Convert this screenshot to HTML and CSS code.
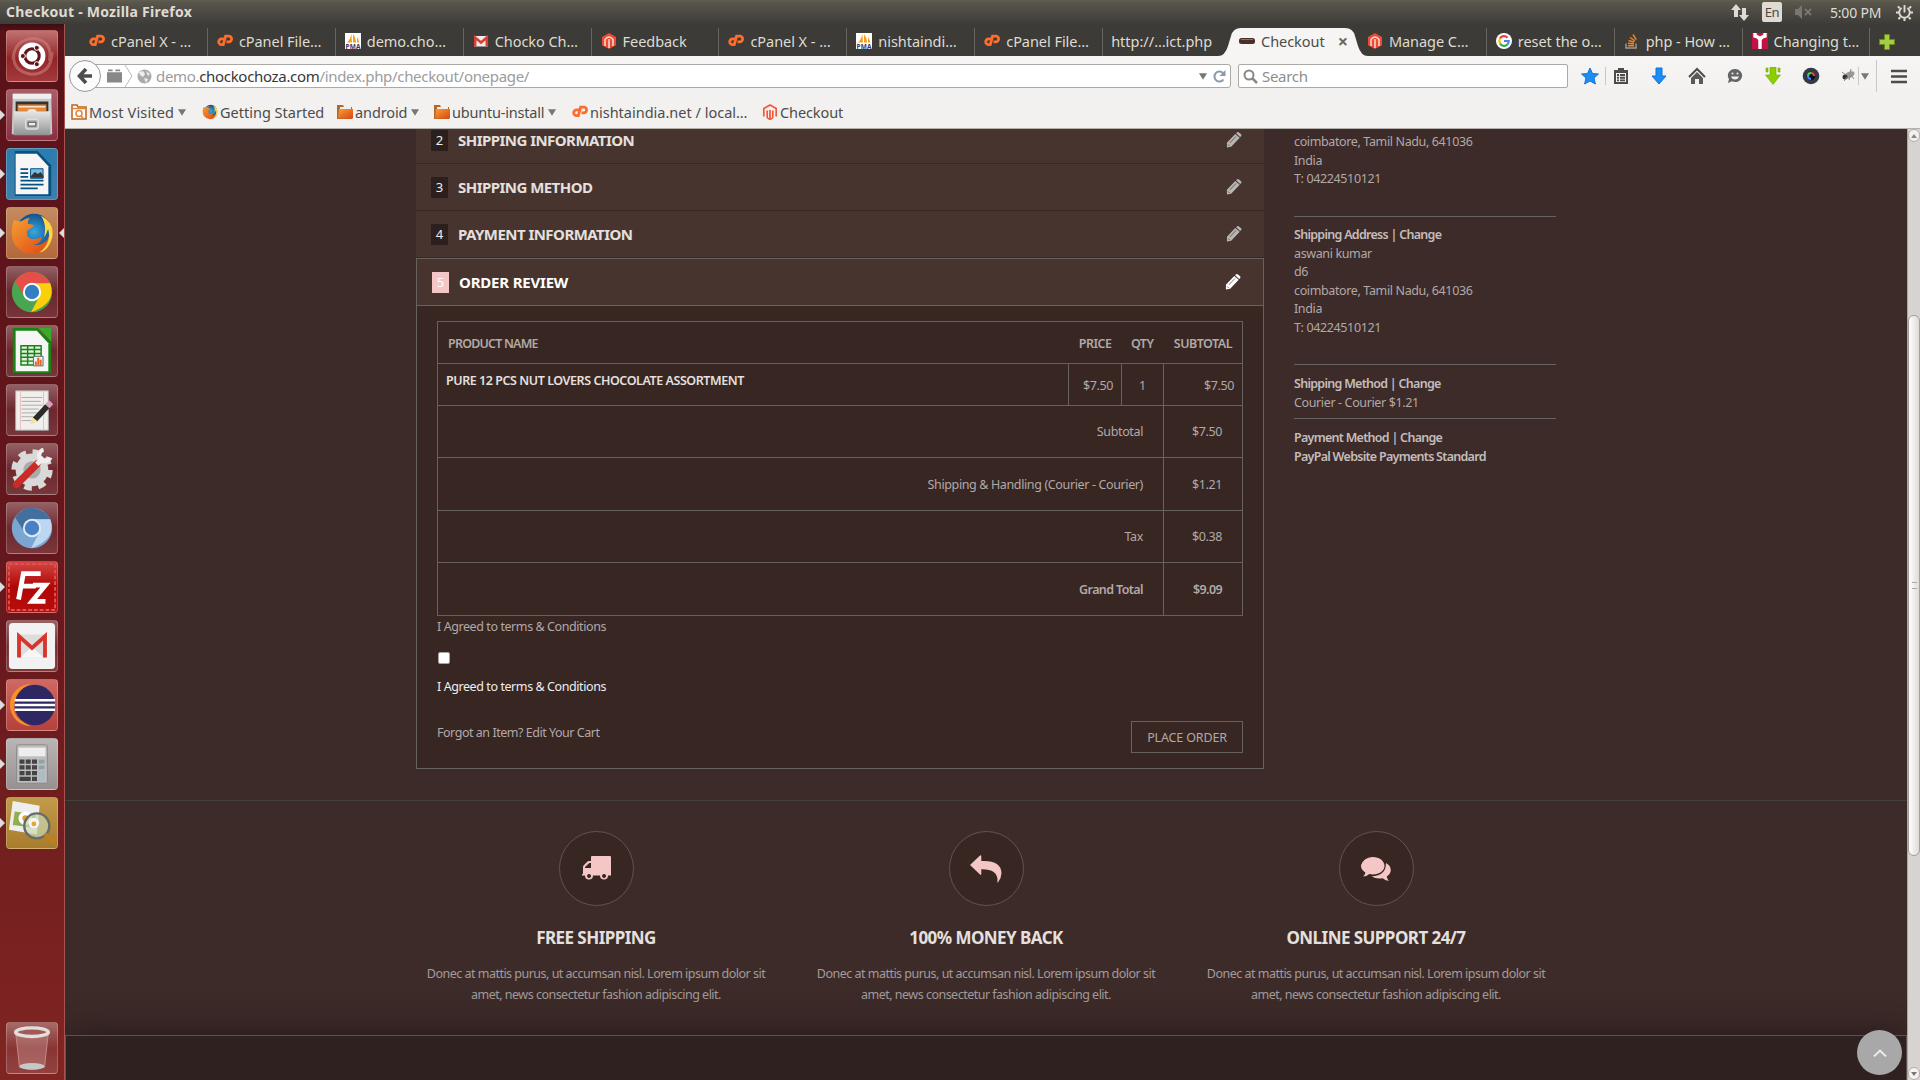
FILE: index.html
```html
<!DOCTYPE html>
<html lang="en">
<head>
<meta charset="utf-8">
<title>Checkout - Mozilla Firefox</title>
<link rel="stylesheet" href="styles.css">
</head>
<body>
<svg class="defs" aria-hidden="true">
<defs>
<linearGradient id="steel" x1="0" y1="0" x2="0" y2="1"><stop offset="0" stop-color="#eee"/><stop offset="1" stop-color="#929292"/></linearGradient>
<linearGradient id="fire" x1="0" y1="0" x2="1" y2="1"><stop offset="0" stop-color="#f7a030"/><stop offset="1" stop-color="#dd4414"/></linearGradient>
<radialGradient id="globe"><stop offset="0" stop-color="#35a8e0"/><stop offset="1" stop-color="#14508f"/></radialGradient>
<symbol id="cp" viewBox="0 0 16 16"><g fill="none" stroke="#ff6c2c" stroke-width="2.8"><path d="M7.500 5.800H4.600a2.800 2.800 0 0 0 0 5.800H6.300L8.600 3.200h3.200a2.800 2.800 0 0 1 0 5.600H9.500"/></g></symbol>
<symbol id="pma" viewBox="0 0 16 16"><path fill="#fff" d="M0 0h16v16H0z"/><path fill="#f8a01c" d="M2 9.5Q5 7 6.4 1L7 9.5zM8 9.5V1q3 4 3.3 8.500zM12 9.500V4q2 3 2.200 5.500z"/><text x="0.5" y="15.500" font-size="6.500" font-weight="bold" fill="#36366c" textLength="15">PMA</text></symbol>
<symbol id="mag" viewBox="0 0 16 16"><path fill="#ee4b35" d="M8 0l7 4v8.200L8 16l-7-3.800V4z"/><path d="M4 13V6.500Q8 1.500 12 6.500V13M8 6v9" fill="none" stroke="#f8ddd6" stroke-width="1.500"/></symbol>
<symbol id="maglight" viewBox="0 0 16 16"><path d="M1.800 12.500V4.600L8 1l6.200 3.600v7.900M5.200 13.800V6.500M10.800 13.800V6.500M8 6v9.500M5.200 13.800L8 15.400l2.800-1.600" fill="none" stroke="#ee5a3c" stroke-width="1.700"/></symbol>
<symbol id="gm" viewBox="0 0 16 16"><path fill="#eee" d="M1 3h14v10.500H1z"/><path d="M2.200 13.500V4.500L8 9.500l5.800-5v9" fill="none" stroke="#d9402f" stroke-width="2.500"/></symbol>
<symbol id="folder" viewBox="0 0 16 16"><path fill="#b3672c" d="M0 1h6l1 2h8v12H0z"/><path fill="#f3ede6" d="M3 3h11v3H3z"/><path fill="url(#fire)" d="M2 5h14v9.500H1z"/></symbol>
<symbol id="pencil" viewBox="0 0 17 17"><path fill="currentColor" d="M1 11.500L9.800 2l4.800 4.200L5.500 15.800 1 16.500zM10.800 1.300l1-1q1-.6 2 .3l2.200 1.900q.8 1 0 1.900l-1 1z"/><path d="M4 11.700l6.600-7M2.200 13.200l1.800 1.800" stroke="#47342e" stroke-width=".7"/></symbol>
<symbol id="firefox" viewBox="0 0 44 44"><circle cx="24" cy="20" r="18" fill="url(#globe)"/><path fill="url(#fire)" d="M4 8q4 2 8 1 4-3 8-3-3 3-2 6 5 0 6 2l-7 5q-1 8 7 8 5 0 8-3-1 8-9 9 16 1 18-16 3 16-8 22-16 8-28-6Q-1 22 4 8z"/><path fill="#ffd640" d="M31 4q14 7 11 22-3 12-13 15 13-10 9-24-2 6-4 8 3-12-3-21z"/></symbol>
<symbol id="down" viewBox="0 0 10 8"><path fill="#777" d="M0 0h10L5 8z"/></symbol>
</defs>
</svg>

<header class="panel">
  <span class="panel-title">Checkout - Mozilla Firefox</span>
  <div class="indicators">
    <svg width="18" height="18" viewBox="0 0 18 18" fill="#dfdbd2"><path d="M5 1l5 6H7v7H3V7H0zM13 18l-5-6h3V5h4v7h3z"/></svg>
    <span class="lang">En</span>
    <svg width="19" height="14" viewBox="0 0 19 14"><path fill="#7b776e" d="M1 4h3l4-4v14L4 10H1z"/><path d="M11 4l6 6M17 4l-6 6" stroke="#7b776e" stroke-width="1.800"/></svg>
    <span class="clock">5:00 PM</span>
    <svg width="17" height="17" viewBox="0 0 18 18" fill="none" stroke="#dfdbd2"><path d="M6 4.200A5.600 5.600 0 1 0 12 4.200M9 1v8" stroke-width="2"/><path d="M2 2.500l2 2M16 2.500l-2 2M0 9h3M15 9h3M2.500 16l2-2M15.500 16l-2-2M9 15v3" stroke-width="2.200"/></svg>
  </div>
</header>

<div class="desktop">
<nav class="launcher">
  <div class="tile t-dash"><svg viewBox="0 0 52 52"><path d="M6 30Q8 7 30 8 48 12 44 31M47 22Q46 45 25 45 6 42 7 25" fill="none" stroke="#cf8584" stroke-width="3" opacity=".55"/><circle cx="26" cy="26" r="14" fill="#fff"/><circle cx="26" cy="26" r="7.500" fill="none" stroke="#5c1619" stroke-width="3.200"/><g fill="#5c1619" stroke="#fff"><circle cx="16.500" cy="26" r="2.600"/><circle cx="31" cy="17.500" r="2.600"/><circle cx="31" cy="34.500" r="2.600"/></g></svg></div>
  <div class="tile t-files run"><svg viewBox="0 0 52 52"><path fill="#c9c9c9" d="M6 4h40l1 42H5z"/><path fill="#efefef" d="M6 4h40v5H6z"/><path fill="#333" d="M9 12h34v11H9z"/><path fill="#e68736" d="M11 15h30v7H11z"/><path d="M12 17.500h28" stroke="#fff" stroke-width="1.200"/><path fill="url(#steel)" d="M7 22h14l2-2h6l2 2h14v25H7z"/><rect x="19.500" y="30.500" width="13" height="10" rx="2" fill="#b5b5b5" stroke="#ddd" stroke-width="1.500"/><path fill="#eee" stroke="#444" d="M22 33.500h8v4h-8z"/></svg></div>
  <div class="tile t-writer run"><svg viewBox="0 0 52 52"><path fill="#075281" d="M8 2h24l14 15v32H8z"/><path fill="#f6f6f6" d="M9 5h22l12 13v29H9z"/><path fill="#2a7db4" d="M33 2h13v14z"/><path d="M14 21h8M14 25h8M14 29h8M14 33h24M14 37h24M14 41h18" stroke="#075281" stroke-width="1.800"/><path fill="#70bce5" stroke="#075281" d="M24.500 20.500h13v10h-13z"/><path fill="#333" d="M25 30v-2l4-4 3 2 3-2 3 4v2z"/></svg></div>
  <div class="tile t-firefox run focus"><svg viewBox="0 0 52 52"><use href="#firefox" x="3" y="4" width="46" height="46"/></svg></div>
  <div class="tile"><svg viewBox="0 0 52 52"><circle cx="26" cy="26" r="21" fill="#4aa551"/><path fill="#e64f47" d="M8.500 15Q15 5 26 5q13 1 19 12H26l-8 13z"/><path fill="#fbcf0a" d="M26 17h19q7 21-20 30l9-17z"/><circle cx="26" cy="26" r="9.500" fill="#fff"/><circle cx="26" cy="26" r="7.500" fill="#347fc2"/></svg></div>
  <div class="tile"><svg viewBox="0 0 52 52"><path fill="#178312" d="M6 2h26l14 15v32H6z"/><path fill="#f6f6f6" d="M9 5h22l12 13v29H9z"/><path fill="#35ad26" d="M33 2h13v14z"/><path fill="#dff0db" stroke="#178312" stroke-width="1.500" d="M14.500 20.500h21v20h-21zM14 24.500h22M14 28.500h22M14 32.500h22M14 36.500h22M21.500 20v20M28.500 20v20"/><path fill="#eee" stroke="#666" d="M27.500 31.500h10v10h-10z"/><path d="M30 41v-4M32.500 41v-8M35 41v-6" stroke="#e46422" stroke-width="2"/></svg></div>
  <div class="tile"><svg viewBox="0 0 52 52"><path fill="#f0efec" stroke="#aaa" d="M9 6h34v41H9z"/><path d="M15 13h22M15 17h20M15 21h22M15 25h18M15 29h20M15 33h13M15 37h10" stroke="#aaa"/><path d="M14 6v41M38 6v41" stroke="#e8bcbc"/><path d="M29 36l13-14" stroke="#2b2b2b" stroke-width="6"/><path d="M42 22l4-4" stroke="#dc9cc5" stroke-width="6"/><path fill="#efe5a0" d="M24 41l2-8 6 5z"/></svg></div>
  <div class="tile"><svg viewBox="0 0 52 52"><circle cx="26" cy="27" r="17" fill="#d9d9d9"/><circle cx="26" cy="27" r="18" fill="none" stroke="#d9d9d9" stroke-width="7" stroke-dasharray="7.600 6.540"/><circle cx="26" cy="27" r="9" fill="#aaa"/><path d="M10 42L31 21" stroke="#ca2b26" stroke-width="7.500" stroke-linecap="round"/><path d="M31 21l7-7" stroke="#eee" stroke-width="5"/><path d="M38 6a6 6 0 1 0 7 8" fill="none" stroke="#eee" stroke-width="4.500"/></svg></div>
  <div class="tile"><svg viewBox="0 0 52 52"><circle cx="26" cy="26" r="21" fill="#7ba6d1"/><path fill="#426f9e" d="M8.500 15Q15 5 26 5q13 1 19 12H26l-8 13z"/><path fill="#bcd7f1" d="M26 17h19q7 21-20 30l9-17z"/><circle cx="26" cy="26" r="9.500" fill="#ddebf7"/><circle cx="26" cy="26" r="7.500" fill="#4980c4"/></svg></div>
  <div class="tile t-fz run"><svg viewBox="0 0 52 52"><rect x="2" y="2" width="48" height="48" fill="none" stroke="#da5450" stroke-width="2" stroke-dasharray="4 2"/><path d="M12 39l5-27h18M15 25h15M27 24h13L26 41h14" fill="none" stroke="#fff" stroke-width="5"/></svg></div>
  <div class="tile"><svg viewBox="0 0 52 52"><rect x="2" y="2" width="48" height="48" rx="4" fill="#f2f2f2"/><path fill="#ddd" d="M11 14h30v24H11z"/><path fill="#f7f7f7" d="M14 38l12-11 12 11z"/><path d="M12.500 38V16L26 28l13.500-12v22" fill="none" stroke="#d8342c" stroke-width="4"/></svg></div>
  <div class="tile t-eclipse run"><svg viewBox="0 0 52 52"><path fill="#f5902a" d="M25 4A22 22 0 0 0 25 48Q3 39 8 23 12 8 25 4z"/><circle cx="29" cy="26" r="21" fill="#2d2764"/><path d="M8 21h42M8 26h42M8 31h42" stroke="#fff" stroke-width="2.600"/></svg></div>
  <div class="tile t-calc run"><svg viewBox="0 0 52 52"><rect x="10" y="6" width="32" height="40" rx="2" fill="#bdbdbd" stroke="#888"/><path fill="#ededed" d="M12 9h28v9H12z"/><path d="M13 23.500h18.500M13 29.500h18.500M13 35.500h18.500" stroke="#444" stroke-width="4.500" stroke-dasharray="5.200 1.300"/><path d="M13 41.500h11.700M26 41.500h5.200" stroke="#444" stroke-width="4.500"/><path d="M33 23.500h6M33 29.500h6" stroke="#8da3aa" stroke-width="4"/><path d="M33 38.500h6" stroke="#a9bdc4" stroke-width="10"/></svg></div>
  <div class="tile t-photo run"><svg viewBox="0 0 52 52"><path fill="#eee" d="M6 3l28 5-3 30L2 33z"/><path fill="#91ae51" d="M8 14l22 3-2 14-22-3z"/><circle cx="19" cy="21" r="7" fill="#fff"/><circle cx="19" cy="21" r="3" fill="#e89a26"/><circle cx="31" cy="29" r="13" fill="#c9d9b4" fill-opacity=".7" stroke="#666b6c" stroke-width="2.500"/><circle cx="28" cy="26" r="5.500" fill="#f5f5f5"/><circle cx="28" cy="27" r="2.500" fill="#e8a63a"/><path d="M41 39l7 6" stroke="#c37e1c" stroke-width="5" stroke-linecap="round"/></svg></div>
  <div class="tile trash"><svg viewBox="0 0 52 52"><path fill="#d8aaa5" fill-opacity=".35" stroke="#c98984" d="M9 10h34l-4 36q-13 4-26 0z"/><ellipse cx="26" cy="9.500" rx="17" ry="4.500" fill="#a25a57" stroke="#dfe0de" stroke-width="3.500"/><ellipse cx="26" cy="45" rx="13" ry="3.500" fill="#c5c8c4"/></svg></div>
</nav>

<div class="browser">
  <div class="tabs">
    <div class="tab"><svg><use href="#cp"/></svg><span>cPanel X - …</span></div>
    <div class="tab"><svg><use href="#cp"/></svg><span>cPanel File…</span></div>
    <div class="tab"><svg><use href="#pma"/></svg><span>demo.cho…</span></div>
    <div class="tab"><svg><use href="#gm"/></svg><span>Chocko Ch…</span></div>
    <div class="tab"><svg><use href="#mag"/></svg><span>Feedback</span></div>
    <div class="tab"><svg><use href="#cp"/></svg><span>cPanel X - …</span></div>
    <div class="tab"><svg><use href="#pma"/></svg><span>nishtaindi…</span></div>
    <div class="tab"><svg><use href="#cp"/></svg><span>cPanel File…</span></div>
    <div class="tab last"><span>http://…ict.php</span></div>
    <div class="tab active"><svg class="tab-shape" viewBox="0 0 154 28"><path fill="#f6f5f3" d="M0 28Q7 28 10 18L13 8Q15 0 23 0H127Q135 0 137 8l3 10q3 10 10 10z"/></svg><svg class="choc" viewBox="0 0 16 16"><rect x="0" y="5" width="16" height="6" rx="2.500" fill="#493029"/><path d="M2 6.500h12" stroke="#8a746c"/></svg><span>Checkout</span><b class="close">×</b></div>
    <div class="tab"><svg><use href="#mag"/></svg><span>Manage C…</span></div>
    <div class="tab"><svg viewBox="0 0 16 16"><circle cx="8" cy="8" r="8" fill="#fff"/><g fill="none" stroke-width="2.200"><path stroke="#ea4335" d="M4 5.500a4.700 4.700 0 0 1 7.500-.8"/><path stroke="#fbbc05" d="M4 10.500a5 5 0 0 1 0-5"/><path stroke="#34a853" d="M11.500 11.500A4.700 4.700 0 0 1 4 10.500"/><path stroke="#4285f4" d="M8 8h4.700q0 2-1.200 3.500"/></g></svg><span>reset the o…</span></div>
    <div class="tab"><svg viewBox="0 0 16 16"><path d="M2 10.500v4.500h10v-4.500" fill="none" stroke="#999" stroke-width="1.500"/><path d="M4 12.800h6M4 10.300l6 .6M4.500 7.500l5.800 1.800M6 4.500l5 3.400M9 1.500l3.200 5.200" stroke="#f48024" stroke-width="1.500"/></svg><span>php - How …</span></div>
    <div class="tab"><svg viewBox="0 0 16 16"><path fill="#c31244" d="M0 0h16v16H0z"/><path d="M3 0v3q5 1 5 5v8M13 0v3q-5 1-5 5" fill="none" stroke="#fff" stroke-width="3.400"/></svg><span>Changing t…</span></div>
    <svg class="plus" viewBox="0 0 16 16"><path fill="#a4cd44" stroke="#668b1d" d="M5.500.5h5v5h5v5h-5v5h-5v-5h-5v-5h5z"/></svg>
  </div>

  <div class="toolbar">
    <div class="back"><svg width="16" height="16" viewBox="0 0 16 16"><path d="M9 1L2.500 8 9 15M3 8h12" fill="none" stroke="#4d4d4d" stroke-width="3.600"/></svg></div>
    <div class="urlbar">
      <svg width="15" height="14" viewBox="0 0 16 14" fill="#888"><path d="M0 3h16v11H0zM1 0h5v2H1zM9 0h5v2H9z"/></svg>
      <svg width="9" height="22" viewBox="0 0 9 22"><path d="M1 0l7 11-7 11" fill="none" stroke="#b9b9b9"/></svg>
      <svg width="15" height="15" viewBox="0 0 15 15"><circle cx="7.500" cy="7.500" r="7" fill="#aaa"/><path fill="#eee" d="M2 3l4-1 2 3-2 3-3-2zM9 2l4 3-2 2zM7 9l4 1-2 4z"/></svg>
      <span class="url">demo.<b>chockochoza.com</b>/index.php/checkout/onepage/</span>
      <svg class="drop" width="8" height="7"><use href="#down"/></svg>
      <svg width="13" height="13" viewBox="0 0 13 13"><path d="M10.500 9.500A5 5 0 1 1 10 3" fill="none" stroke="#8b9aa8" stroke-width="2"/><path fill="#8b9aa8" d="M12.500 0v6h-6z"/></svg>
    </div>
    <div class="search"><svg width="15" height="15" viewBox="0 0 15 15"><circle cx="6" cy="6" r="4.500" fill="none" stroke="#888" stroke-width="2"/><path d="M9 9l5 5" stroke="#888" stroke-width="2.500"/></svg><span>Search</span></div>
    <div class="tools">
      <svg viewBox="0 0 18 18"><path fill="#1d8cf5" stroke="#1273d6" d="M9 1l2.500 5.500 6 .5-4.500 4 1.400 6L9 14l-5.400 3L5 11 .5 7l6-.5z"/></svg>
      <span class="sep"></span>
      <svg viewBox="0 0 18 18"><path fill="#4c4c4c" fill-rule="evenodd" d="M6 1h6v2h4v14H2V3h4zM4 6v9h10V6zM5 7h2v2H5zM8 7h5v2H8zM5 9.800h2v2H5zM8 9.800h5v2H8zM5 12.600h2v1.600H5zM8 12.600h5v1.600H8z"/></svg>
      <svg viewBox="0 0 18 18"><path fill="#1d8cf5" stroke="#1273d6" d="M6 1h6v8h4l-7 8-7-8h4z"/></svg>
      <svg viewBox="0 0 18 18"><path d="M1 10l8-8 8 8" fill="none" stroke="#4c4c4c" stroke-width="2"/><path fill="#5a5a5a" d="M9 5l6 6v6h-4v-5H7v5H3v-6z"/></svg>
      <svg viewBox="0 0 18 18"><path fill="#656565" d="M9 2a7 6.500 0 1 1-3 12.300L2 16l1-4A7 6.500 0 0 1 9 2z"/><path d="M5 9.500h8q-1 3-4 3t-4-3z" fill="#eee"/><circle cx="6.500" cy="6.500" r="1" fill="#eee"/><circle cx="11.500" cy="6.500" r="1" fill="#eee"/></svg>
      <svg viewBox="0 0 18 18"><path fill="#8bcf00" stroke="#6fa900" stroke-width=".6" d="M6 0h6v8h4.500L9 17.500 1.500 8H6zM2 1h2v4H2zM14 1h2v4h-2z"/></svg>
      <svg viewBox="0 0 18 18"><circle cx="9" cy="9" r="8.300" fill="#343b45"/><circle cx="9" cy="9" r="4.300" fill="#111"/><path d="M6 9a3 3 0 0 1 3-3" stroke="#3ae04b" stroke-width="2" fill="none"/><path d="M9 6a3 3 0 0 1 3 3" stroke="#ef3e5c" stroke-width="2" fill="none"/><path d="M9 12a3 3 0 0 1-3-3" stroke="#4385fa" stroke-width="2" fill="none"/></svg>
      <svg viewBox="0 0 18 18"><ellipse cx="9" cy="8" rx="6" ry="3" fill="#999" transform="rotate(-25 9 8)"/><circle cx="5" cy="10" r="2.500" fill="#333"/><path d="M2 5l4 3M4 14l3-4M9 13l1-4M14 12l-3-4M11 2l-1 5" stroke="#888"/></svg>
    </div>
    <span class="sep"></span>
    <svg class="more" width="8" height="7"><use href="#down"/></svg>
    <span class="sep tall"></span>
    <svg class="menu" width="16" height="15" viewBox="0 0 16 15"><path d="M0 2h16M0 7.500h16M0 13h16" stroke="#4c4c4c" stroke-width="2.600"/></svg>
  </div>

  <div class="bookmarks">
    <a class="b1"><svg viewBox="0 0 16 16"><path fill="#fff" stroke="#b8641e" stroke-width="1.500" d="M1 1h5l1 2h8v12H1z"/><circle cx="8" cy="9.500" r="3" fill="none" stroke="#e2853b" stroke-width="1.500"/><path d="M1 4.500h14M10 12l3 3" stroke="#e2853b" stroke-width="1.500"/></svg><span>Most Visited</span><svg class="dd"><use href="#down"/></svg></a>
    <a class="b2"><svg><use href="#firefox"/></svg><span>Getting Started</span></a>
    <a class="b3"><svg><use href="#folder"/></svg><span>android</span><svg class="dd"><use href="#down"/></svg></a>
    <a class="b4"><svg><use href="#folder"/></svg><span>ubuntu-install</span><svg class="dd"><use href="#down"/></svg></a>
    <a class="b5"><svg><use href="#cp"/></svg><span>nishtaindia.net / local…</span></a>
    <a class="b6"><svg><use href="#maglight"/></svg><span>Checkout</span></a>
  </div>

  <div class="viewport">
  <main class="page">
    <div class="checkout">
      <section class="steps">
        <div class="step"><i>2</i><h2>SHIPPING INFORMATION</h2><svg><use href="#pencil"/></svg></div>
        <div class="step"><i>3</i><h2>SHIPPING METHOD</h2><svg><use href="#pencil"/></svg></div>
        <div class="step"><i>4</i><h2>PAYMENT INFORMATION</h2><svg><use href="#pencil"/></svg></div>
        <div class="review">
          <div class="step current"><i>5</i><h2>ORDER REVIEW</h2><svg><use href="#pencil"/></svg></div>
          <div class="review-body">
            <table>
              <colgroup><col class="c-name"><col class="c-price"><col class="c-qty"><col class="c-sub"></colgroup>
              <tr class="head"><th class="name">PRODUCT NAME</th><th>PRICE</th><th>QTY</th><th>SUBTOTAL</th></tr>
              <tr class="item"><td class="name"><b>PURE 12 PCS NUT LOVERS CHOCOLATE ASSORTMENT</b></td><td>$7.50</td><td class="mid">1</td><td>$7.50</td></tr>
              <tr class="sum"><td colspan="3">Subtotal</td><td>$7.50</td></tr>
              <tr class="sum tall"><td colspan="3">Shipping &amp; Handling (Courier - Courier)</td><td>$1.21</td></tr>
              <tr class="sum"><td colspan="3">Tax</td><td>$0.38</td></tr>
              <tr class="sum tall grand"><td colspan="3">Grand Total</td><td>$9.09</td></tr>
            </table>
            <p class="agree">I Agreed to terms &amp; Conditions</p>
            <span class="check"></span>
            <p class="agree bright">I Agreed to terms &amp; Conditions</p>
            <div class="actions"><p>Forgot an Item? Edit Your Cart</p><a class="place"><span>PLACE ORDER</span></a></div>
          </div>
        </div>
      </section>
      <aside>
        <div class="blk a1"><p>coimbatore, Tamil Nadu, 641036</p><p>India</p><p>T: 04224510121</p></div>
        <div class="blk a2"><p><b>Shipping Address | Change</b></p><p>aswani kumar</p><p>d6</p><p>coimbatore, Tamil Nadu, 641036</p><p>India</p><p>T: 04224510121</p></div>
        <div class="blk a3"><p><b>Shipping Method | Change</b></p><p>Courier - Courier $1.21</p></div>
        <div class="blk a4"><p><b>Payment Method | Change</b></p><p><b>PayPal Website Payments Standard</b></p></div>
      </aside>
    </div>
    <section class="features">
      <article><div class="circle"><svg class="truck" width="29" height="25" viewBox="0 0 29 25"><path fill="#f4c6c6" fill-rule="evenodd" d="M10 0h18q1 0 1 1v18.500h-3a4 4 0 1 1-8 0h-7a4 4 0 1 1-8 0H0V18h1V11q0-1 1-2l3-3q1-1 2-1h2V1q0-1 1-1zM9 7H7.300L3 11v1h6zM7 18a2 2 0 1 0 .1 0zM22 18a2 2 0 1 0 .1 0z"/></svg></div><h3>FREE SHIPPING</h3><p>Donec at mattis purus, ut accumsan nisl. Lorem ipsum dolor sit<br>amet, news consectetur fashion adipiscing elit.</p></article>
      <article><div class="circle"><svg width="32" height="28" viewBox="0 0 32 28"><path fill="#f4c6c6" d="M0 10L10 .6q1.300-.8 1.300.8V6Q31 5 31.500 18 31.400 23 28 27.500q-.8.200-.6-.8Q28.500 14 11.300 14.300V19q0 1.500-1.300.6z"/></svg></div><h3>100% MONEY BACK</h3><p>Donec at mattis purus, ut accumsan nisl. Lorem ipsum dolor sit<br>amet, news consectetur fashion adipiscing elit.</p></article>
      <article><div class="circle"><svg width="30" height="24" viewBox="0 0 30 24"><path fill="#f4c6c6" d="M11.800 0C18.500 0 23.500 4 23.500 8.800S18.500 17.500 11.800 17.500q-2 0-3.500-.4-3 2.500-6.300 2.500Q4 18 4.400 15.500 0 13 0 8.800 0 4 11.800 0z"/><path fill="#f4c6c6" d="M11.800 0Q2 .5 0 8.800h12zM25 6q4.800 2.500 4.800 7 0 3.800-4 6.500.2 2.500 2.200 4.200-3.500 0-6.300-2.500-6 1.300-11.200-1.900Q25 19 25 6z"/></svg></div><h3>ONLINE SUPPORT 24/7</h3><p>Donec at mattis purus, ut accumsan nisl. Lorem ipsum dolor sit<br>amet, news consectetur fashion adipiscing elit.</p></article>
    </section>
    <footer></footer>
    <div class="to-top"><svg width="14" height="8" viewBox="0 0 14 8"><path d="M1 7.500l6-6 6 6" fill="none" stroke="#eee" stroke-width="1.800"/></svg></div>
  </main>
  <div class="scrollbar"><span class="sb-btn"><svg width="6" height="4"><path d="M0 4h6L3 0z" fill="#888"/></svg></span><div class="track"><div class="thumb"><i></i></div></div><span class="sb-btn"><svg width="6" height="4"><path d="M0 0h6L3 4z" fill="#777"/></svg></span></div>
  </div>
</div>
</div>
</body>
</html>
```
FILE: styles.css
```css
* { box-sizing: border-box; }
body { margin: 0; width: 1920px; height: 1080px; overflow: hidden; font-family: "Noto Sans", sans-serif; background: #3d2b29; }
p, h2, h3 { margin: 0; }
svg { display: block; flex: none; }
.defs { position: absolute; width: 0; height: 0; }

.panel { height: 24px; display: flex; justify-content: space-between; align-items: center; padding: 0 7px 0 6px; background: linear-gradient(#63604f 0, #59564d 2px, #3d3c38); color: #dfdbd2; font-size: 14.5px; }
.panel-title { font-weight: bold; font-size: 14px; letter-spacing: .25px; line-height: 20px; margin-top: -1px; }
.indicators { display: flex; align-items: center; }
.lang { margin-left: 13px; width: 20px; height: 20px; border-radius: 2px; background: #dfdbd2; color: #4a4842; font-size: 13px; line-height: 20px; text-align: center; letter-spacing: -.5px; }
.indicators .lang + svg { margin-left: 12px; }
.clock { margin: 0 13px 0 17px; font-size: 14px; letter-spacing: -.2px; width: 53px; white-space: nowrap; }

.desktop { display: flex; height: 1056px; }
.launcher { width: 65px; padding: 6px 0 6px 6px; display: flex; flex-direction: column; gap: 7px; background: linear-gradient(#3b0d10 0, #5a1219 8px, #64171c 50%, #802522); border-right: 1px solid #a75350; }
.tile { position: relative; width: 52px; height: 52px; flex: none; border-radius: 4px; border: 1px solid rgba(255,255,255,.22); background: linear-gradient(rgba(255,255,255,.32), rgba(255,255,255,.08) 50%, rgba(255,255,255,.14)); }
.tile svg { width: 50px; height: 50px; }
.t-dash { background: linear-gradient(#c17170, #922527 55%, #a33a3b); }
.t-files { background: linear-gradient(#aa5d68, #8b2f3f); }
.t-writer { background: linear-gradient(#2e7cab, #3e80ad); }
.t-firefox { background: linear-gradient(#c48b60, #b3683a); }
.t-fz { background: linear-gradient(#d34643, #af0606 50%, #b90d0d); }
.t-eclipse { background: linear-gradient(#cf6961, #b6403c); }
.t-calc { background: linear-gradient(#bbb5b5, #979090); }
.t-photo { background: linear-gradient(#c29b4a, #a87c2c); }
.run::before { content: ""; position: absolute; left: -7px; top: 20px; border: 5px solid transparent; border-left-color: #ddd; border-right: 0; }
.focus::after { content: ""; position: absolute; right: -7px; top: 20px; border: 5px solid transparent; border-right-color: #ddd; border-left: 0; }
.trash { margin-top: auto; }

.browser { width: 1855px; display: flex; flex-direction: column; }
.tabs { height: 32px; display: flex; align-items: flex-end; padding-left: 15px; background: #3c3b37; color: #dfdbd2; }
.tab { position: relative; width: 127.900px; height: 28px; flex: none; display: flex; align-items: center; gap: 6px; padding: 0 0 2px 9px; border-right: 1px solid #67655d; font-size: 14.500px; white-space: nowrap; letter-spacing: -.05px; }
.tab > svg { width: 16px; height: 16px; }
.tab.last { border-right: 0; padding-left: 8px; letter-spacing: 0; }
.tab.active { border: 0; color: #4c4c4c; padding-left: 8px; }
.tab.active > svg.tab-shape { position: absolute; left: -13px; top: 0; width: 154px; height: 28px; }
.tab.active > .choc, .tab.active > span, .tab.active > .close { position: relative; }
.tab.active + .tab { padding-left: 8px; }
.close { margin-left: auto; margin-right: 11px; font-size: 18px; color: #666; }
.plus { width: 16px; height: 16px; margin: 0 0 6px 9px; }

.toolbar { height: 40px; display: flex; align-items: center; padding-left: 4px; background: linear-gradient(#f6f5f3, #f2f1f0); }
.back { position: relative; z-index: 1; width: 32px; height: 32px; border-radius: 50%; border: 1px solid #999; background: #fbfbfb; display: flex; align-items: center; justify-content: center; }
.urlbar { width: 1144px; height: 24px; margin-left: -14px; padding: 0 4px 0 19px; display: flex; align-items: center; background: #fff; border: 1px solid #aaa9a5; border-radius: 0 3px 3px 0; }
.urlbar svg + svg { margin-left: 2px; }
.urlbar svg:nth-child(3) { margin-left: 4px; }
.url { margin-left: 4px; font-size: 15px; color: #9c9c9c; letter-spacing: -.32px; white-space: nowrap; }
.url b { font-weight: normal; color: #383838; }
.urlbar svg.drop { margin-left: auto; }
.urlbar .drop + svg { margin-left: 6px; }
.search { width: 330px; height: 24px; margin-left: 7px; padding-left: 4px; display: flex; align-items: center; gap: 4px; background: #fff; border: 1px solid #aaa9a5; border-radius: 2px; color: #8e8e8e; font-size: 15px; letter-spacing: -.3px; }
.tools { display: grid; grid-template-columns: 24px 7px repeat(6, 38px) 18px; align-items: center; margin-left: 13px; }
.tools svg { width: 18px; height: 18px; }
.sep { width: 1px; height: 18px; background: #c6c9cb; }
.sep.tall { height: 32px; margin-left: 7px; }
.more { margin-left: 2px; }
.menu { margin-left: 14px; }

.bookmarks { height: 33px; display: flex; align-items: center; padding: 0 0 1px 6px; background: #f2f1f0; border-bottom: 1px solid #b3afab; color: #4c4c4c; font-size: 14.500px; letter-spacing: 0; white-space: nowrap; }
.bookmarks a { display: flex; align-items: center; gap: 2px; }
.bookmarks svg { width: 16px; height: 16px; }
.bookmarks svg.dd { width: 8px; height: 7px; margin: 2px 0 0 2px; }
.b1 { width: 131px; letter-spacing: .15px; } .b2 { width: 135px; } .b3 { width: 97px; letter-spacing: -.1px; } .b4 { width: 138px; letter-spacing: -.2px; } .b5 { width: 190px; } .b6 { letter-spacing: -.1px; }

.viewport { display: flex; height: 951px; }
.page { position: relative; width: 1842px; height: 951px; overflow: hidden; background: #3d2b29; color: #b1a9a7; font-size: 12.500px; letter-spacing: -.37px; display: flex; flex-direction: column; }
.checkout { display: flex; gap: 30px; padding-left: 351px; height: 671px; flex: none; }
.steps { width: 848px; margin-top: -12px; }
.step { height: 47px; display: flex; align-items: center; padding: 0 22px 0 15px; background: #47342e; border-bottom: 1px solid #392724; }
.step i { width: 17px; height: 21px; background: #2c201e; color: #eee; font-style: normal; font-size: 13px; line-height: 21px; text-align: center; letter-spacing: 0; }
.step h2 { margin-left: 10px; font-size: 15px; line-height: 20px; color: #e4e0df; letter-spacing: -.54px; }
.step svg { width: 16px; height: 16px; margin-left: auto; color: #b9b5b3; }
.review { border: 1px solid #67625f; height: 511px; background: #382623; }
.step.current { border-bottom-color: #67625f; }
.step.current i { background: #f4c6c6; color: #fff; }
.step.current h2, .step.current svg { color: #fff; }
.step.current h2 { letter-spacing: -.2px; }
.review-body { padding: 15px 20px 0; }
table { width: 805px; table-layout: fixed; border-collapse: collapse; border: 1px solid #67625f; font-size: 12.500px; line-height: 18px; text-align: right; }
.c-name { width: 631px; } .c-price { width: 53px; } .c-qty { width: 42px; } .c-sub { width: 79px; }
tr { height: 42px; }
td { border: 1px solid #67625f; padding: 2px 8px 0; }
th { padding: 2px 10px 0 0; font-weight: 600; letter-spacing: -.5px; }
th.name, td.name { text-align: left; }
th.name { padding-left: 10px; letter-spacing: -.8px; }
td.name { padding: 0 8px 8px; color: #e4e0df; letter-spacing: -.44px; }
td.name b, .blk b { font-weight: 600; }
td.mid { text-align: center; padding: 2px 0 0; }
.sum { height: 52px; } .sum.tall { height: 53px; }
.sum td { padding: 1px 20px 0; }
.grand td { font-weight: 600; letter-spacing: -.6px; }
.agree { line-height: 22px; letter-spacing: -.42px; }
.check { display: block; width: 12px; height: 12px; margin: 14px 0 12px 1px; background: #fff; border: 1px solid #a8a29f; border-radius: 2px; }
.bright { color: #eee; }
.actions { display: flex; justify-content: space-between; margin-top: 23px; }
.actions p { line-height: 24px; letter-spacing: -.47px; }
.place { width: 112px; height: 32px; padding-top: 1px; border: 1px solid #67625f; text-align: center; line-height: 30px; letter-spacing: -.15px; }
aside { width: 262px; line-height: 18.600px; white-space: nowrap; }
.blk b { color: #c4bdbb; letter-spacing: -.72px; }
.a1 { padding: 4px 0 0; height: 87px; }
.a2, .a3, .a4 { border-top: 1px solid #67625f; }
.a2 { padding-top: 9px; height: 148px; } .a3 { padding-top: 10px; height: 54px; } .a4 { padding-top: 10px; }
.features { height: 235px; flex: none; border-top: 1px solid #45403d; padding: 30px 0 0 336px; display: flex; text-align: center; }
article { width: 390px; display: flex; flex-direction: column; align-items: center; }
.circle { width: 75px; height: 75px; border: 1px solid #5e5552; border-radius: 50%; background: #382623; display: flex; align-items: center; justify-content: center; }
h3 { margin-top: 20px; font-size: 17px; line-height: 24px; color: #e4e0df; letter-spacing: -.55px; }
article p { margin-top: 13px; line-height: 21px; color: #a39b99; white-space: nowrap; letter-spacing: -.51px; }
footer { flex: 1; border: 1px solid #5e524f; border-bottom: 0; background: #2f211f; box-shadow: 0 0 36px #241617; }
.to-top { position: absolute; right: 5px; bottom: 5px; width: 45px; height: 45px; border-radius: 50%; background: #a9a8a8; display: flex; align-items: center; justify-content: center; }
.scrollbar { width: 13px; display: flex; flex-direction: column; background: #d6d3d0; border-left: 1px solid #aaa6a2; }
.sb-btn { height: 13px; display: flex; align-items: center; justify-content: center; background: #f3f2f1; border: 1px solid #b3afab; border-radius: 6px; }
.track { flex: 1; padding-top: 173px; }
.thumb { height: 541px; border: 1px solid #a39f9b; border-radius: 6px; background: linear-gradient(90deg, #fff, #dedbd8); display: flex; align-items: center; justify-content: center; }
.thumb i { width: 5px; height: 7px; border: 1px solid #aaa; border-width: 1px 0; }
```
